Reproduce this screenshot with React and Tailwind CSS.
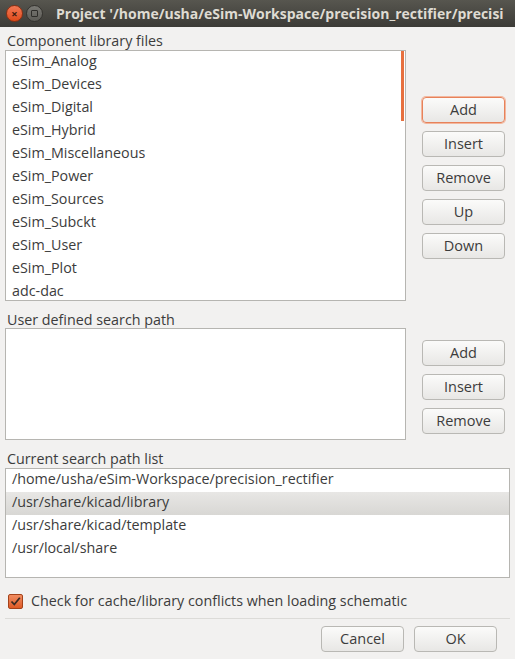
import React from 'react';

const font = { fontFamily: '"Open Sans", "DejaVu Sans", sans-serif' };

const libs = [
  'eSim_Analog',
  'eSim_Devices',
  'eSim_Digital',
  'eSim_Hybrid',
  'eSim_Miscellaneous',
  'eSim_Power',
  'eSim_Sources',
  'eSim_Subckt',
  'eSim_User',
  'eSim_Plot',
  'adc-dac',
];

const paths = [
  '/home/usha/eSim-Workspace/precision_rectifier',
  '/usr/share/kicad/library',
  '/usr/share/kicad/template',
  '/usr/local/share',
];

const Btn = ({ children, focus, className = '' }) => (
  <button
    className={`h-[26px] rounded-[4px] border bg-gradient-to-b from-[#fbfbfa] to-[#e8e7e5] text-[14.5px] text-[#3c3c3c] leading-none ${
      focus ? 'border-[#e7825a] shadow-[0_0_0_1px_#f3b79e]' : 'border-[#b9b8b4]'
    } ${className}`}
  >
    {children}
  </button>
);

export default function App() {
  return (
    <div className="w-[515px] h-[659px] bg-[#f2f1f0] flex flex-col text-[#3c3c3c] overflow-hidden select-none" style={font}>
      {/* title bar */}
      <div className="h-[27px] shrink-0 flex items-center bg-gradient-to-b from-[#57564f] to-[#3c3b37] pl-[6px] gap-[3px]">
        <span className="w-[17px] h-[17px] rounded-full bg-gradient-to-b from-[#f37853] to-[#df4a16] border border-[#8c2f12] flex items-center justify-center text-[#3a1a0e] text-[11px] font-bold leading-none">
          ×
        </span>
        <span className="w-[17px] h-[17px] rounded-full bg-gradient-to-b from-[#7a7974] to-[#5c5b56] border border-[#34332f] flex items-center justify-center">
          <span className="w-[7px] h-[7px] border-[1.5px] border-[#2e2d2a] rounded-[1px]" />
        </span>
        <span className="ml-[10px] text-[14px] font-bold text-[#dfdbd2] whitespace-nowrap overflow-hidden">
          Project '/home/usha/eSim-Workspace/precision_rectifier/precisi
        </span>
      </div>

      <div className="flex flex-col px-[5px] pt-[5px] text-[14.3px]">
        <div className="leading-[17px] pl-[2px]">Component library files</div>
        <div className="flex mt-[1px]">
          <div className="relative w-[401px] h-[251px] bg-white border border-[#b6b5b1] overflow-hidden">
            {libs.map((l) => (
              <div key={l} className="h-[23px] leading-[19px] pl-[6px]">
                {l}
              </div>
            ))}
            <div className="absolute right-[1px] top-0 w-[3px] h-[70px] bg-[#e7703f]" />
          </div>
          <div className="flex-1 flex flex-col items-center gap-[8px] pt-[47px] pl-[11px]">
            <Btn focus className="w-[83px]">Add</Btn>
            <Btn className="w-[83px]">Insert</Btn>
            <Btn className="w-[83px]">Remove</Btn>
            <Btn className="w-[83px]">Up</Btn>
            <Btn className="w-[83px]">Down</Btn>
          </div>
        </div>

        <div className="leading-[17px] pl-[2px] mt-[10px]">User defined search path</div>
        <div className="flex">
          <div className="w-[401px] h-[112px] bg-white border border-[#b6b5b1]" />
          <div className="flex-1 flex flex-col items-center gap-[8px] pt-[12px] pl-[11px]">
            <Btn className="w-[83px]">Add</Btn>
            <Btn className="w-[83px]">Insert</Btn>
            <Btn className="w-[83px]">Remove</Btn>
          </div>
        </div>

        <div className="leading-[17px] pl-[2px] mt-[10px]">Current search path list</div>
        <div className="mt-[1px] w-[505px] h-[110px] bg-white border border-[#b6b5b1]">
          {paths.map((p, i) => (
            <div
              key={p}
              className={`h-[23px] leading-[19px] pl-[6px] ${
                i === 1 ? 'bg-gradient-to-b from-[#e8e7e5] to-[#d8d7d4]' : ''
              }`}
            >
              {p}
            </div>
          ))}
        </div>

        <div className="flex items-center h-[20px] mt-[13px] pl-[3px] gap-[8px]">
          <span className="w-[15px] h-[15px] rounded-[2px] bg-gradient-to-b from-[#f08c60] to-[#df5a24] border border-[#a4421a] flex items-center justify-center">
            <svg width="11" height="11" viewBox="0 0 11 11">
              <path d="M1.5 5.5 L4.3 8.5 L9.8 1.8" fill="none" stroke="#3a2a22" strokeWidth="1.8" />
            </svg>
          </span>
          <span className="leading-[20px]">Check for cache/library conflicts when loading schematic</span>
        </div>

        <div className="h-px bg-[#dcdbd8] mt-[7px]" />

        <div className="flex justify-end gap-[10px] pr-[13px] mt-[7px]">
          <Btn className="w-[83px]">Cancel</Btn>
          <Btn className="w-[83px]">OK</Btn>
        </div>
      </div>
    </div>
  );
}
